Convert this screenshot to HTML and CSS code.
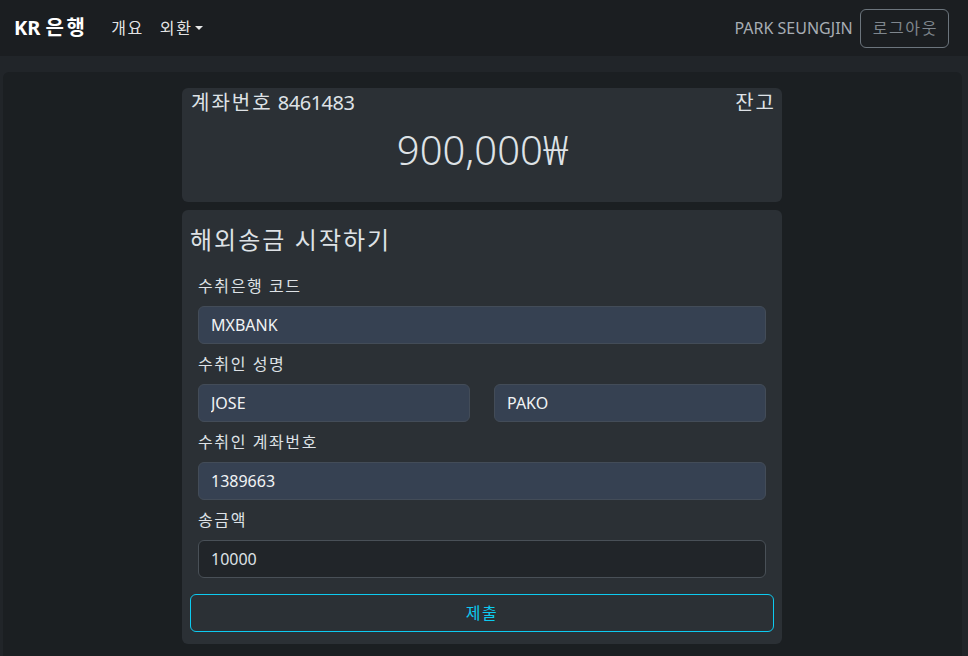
FILE: index.html
```html
<!DOCTYPE html>
<html lang="ko">
<head>
<meta charset="utf-8">
<title>KR 은행</title>
<link rel="stylesheet" href="styles.css">
</head>
<body>
<nav class="navbar">
  <div class="nav-left">
    <a class="brand" href="#">KR <span class="ko">은행</span></a>
    <a class="nav-link" href="#"><span class="ko">개요</span></a>
    <a class="nav-link dropdown" href="#"><span class="ko">외환</span><span class="caret"></span></a>
  </div>
  <div class="nav-right">
    <span class="user">PARK SEUNGJIN</span>
    <button class="btn-logout"><span class="ko">로그아웃</span></button>
  </div>
</nav>
<main class="main">
  <section class="card balance">
    <div class="balance-head">
      <span><span class="ko">계좌번호</span> <span class="num">8461483</span></span>
      <span class="ko">잔고</span>
    </div>
    <div class="amount">900,000₩</div>
  </section>
  <section class="card transfer">
    <h4 class="title ko">해외송금 시작하기</h4>
    <form class="form">
      <div class="group">
        <label class="label ko">수취은행 코드</label>
        <input class="input" value="MXBANK">
      </div>
      <div class="group">
        <label class="label ko">수취인 성명</label>
        <div class="name-row">
          <input class="input" value="JOSE">
          <input class="input" value="PAKO">
        </div>
      </div>
      <div class="group">
        <label class="label ko">수취인 계좌번호</label>
        <input class="input" value="1389663">
      </div>
      <div class="group">
        <label class="label ko">송금액</label>
        <input class="input input-plain" value="10000">
      </div>
    </form>
    <button class="btn-submit"><span class="ko">제출</span></button>
  </section>
</main>
</body>
</html>
```
FILE: styles.css
```css
* { box-sizing: border-box; }
html, body { margin: 0; height: 100%; }
body {
  background: #212529;
  color: #dee2e6;
  font-family: "Noto Sans", "Noto Sans CJK KR", sans-serif;
  font-size: 16px;
  line-height: 1.5;
  overflow: hidden;
}
.ko { letter-spacing: 0.1em; }
.navbar {
  height: 56px;
  background: #1b1e21;
  display: flex;
  align-items: center;
  justify-content: space-between;
  padding: 0 19px 0 14px;
}
.nav-left { display: flex; align-items: center; }
.brand {
  color: #fff;
  font-weight: 700;
  font-size: 20px;
  text-decoration: none;
  margin-right: 24px;
}
.brand .ko { letter-spacing: 0.12em; }
.nav-link {
  color: rgba(255,255,255,0.9);
  text-decoration: none;
  margin-right: 16px;
  display: flex;
  align-items: center;
}
.caret {
  display: inline-block;
  margin-left: 2px;
  border-top: 4px solid rgba(255,255,255,0.9);
  border-left: 4px solid transparent;
  border-right: 4px solid transparent;
}
.nav-right { display: flex; align-items: center; gap: 7px; }
.user { color: #a7adb4; }
.btn-logout {
  font: inherit;
  color: #7f868d;
  background: transparent;
  border: 1px solid #6c757d;
  border-radius: 6px;
  height: 39px;
  padding: 0 10px 0 12px;
}
.main {
  margin: 16px 6px 0 3px;
  background: #1b1f22;
  border-radius: 6px 6px 0 0;
  height: calc(100% - 72px);
  padding: 16px 1px 0 0;
  display: flex;
  flex-direction: column;
  align-items: center;
  gap: 8px;
}
.card {
  width: 600px;
  background: #2b3035;
  border-radius: 6px;
}
.balance { padding: 0 8px 28px 9px; height: 114px; }
.balance-head {
  display: flex;
  justify-content: space-between;
  font-size: 20px;
  line-height: 30px;
}
.num { letter-spacing: -0.5px; }
.balance-head > .ko { margin-right: -2px; }
.amount {
  text-align: center;
  font-size: 40px;
  line-height: 48px;
  margin-top: 8px;
  font-weight: 300;
}
.transfer { padding: 8px 8px 12px; }
.title {
  font-size: 24px;
  font-weight: 400;
  line-height: 29px;
  margin: 7px 0 0 0;
  letter-spacing: 0.085em;
}
.form {
  padding: 0 8px;
  margin-top: 20px;
  display: flex;
  flex-direction: column;
  gap: 8px;
}
.group { display: flex; flex-direction: column; gap: 8px; }
.label { line-height: 24px; }
.name-row { display: flex; gap: 24px; }
.name-row .input { flex: 1; min-width: 0; }
.input {
  font: inherit;
  color: #f1f3f5;
  height: 38px;
  padding: 0 12px;
  background: #364152;
  border: 1px solid #434c58;
  border-radius: 6px;
  width: 100%;
}
.input-plain {
  background: #212529;
  border-color: #495057;
  color: #dee2e6;
}
.btn-submit {
  display: block;
  width: 100%;
  margin-top: 16px;
  height: 38px;
  font: inherit;
  color: #0dcaf0;
  background: transparent;
  border: 1px solid #0dcaf0;
  border-radius: 6px;
}
```
